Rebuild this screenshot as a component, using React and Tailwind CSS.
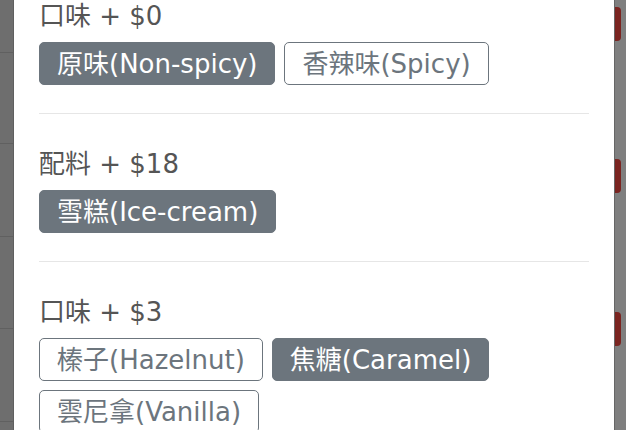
const sections = [
    {
        title: '口味 + $0',
        options: [
            { label: '原味(Non-spicy)', selected: true },
            { label: '香辣味(Spicy)', selected: false },
        ],
    },
    {
        title: '配料 + $18',
        options: [{ label: '雪糕(Ice-cream)', selected: true }],
    },
    {
        title: '口味 + $3',
        options: [
            { label: '榛子(Hazelnut)', selected: false },
            { label: '焦糖(Caramel)', selected: true },
            { label: '雲尼拿(Vanilla)', selected: false },
        ],
    },
];

function Chip({ label, selected }) {
    return (
        <button
            className={
                selected
                    ? 'h-[43px] px-[17px] rounded-[5px] border border-[#6c757d] bg-[#6c757d] text-white text-[26px] leading-none flex items-center'
                    : 'h-[43px] px-[17px] rounded-[5px] border border-[#6c757d] bg-white text-[#6c757d] text-[26px] leading-none flex items-center'
            }
        >
            {label}
        </button>
    );
}

export default function App() {
    return (
        <div
            className="w-[626px] h-[430px] overflow-hidden flex bg-white"
            style={{ fontFamily: '"DejaVu Sans", "Noto Sans CJK TC", sans-serif' }}
        >
            {/* list behind the overlay, left edge */}
            <div className="w-[14px] shrink-0 bg-[#6e6e6e] border-r border-[#5f5f5f] flex flex-col">
                <div className="h-[53px] border-b border-[#606060]"></div>
                <div className="h-[91px] border-b border-[#606060]"></div>
                <div className="h-[93px] border-b border-[#606060]"></div>
                <div className="h-[92px] border-b border-[#606060]"></div>
                <div className="h-[93px] border-b border-[#606060]"></div>
            </div>

            {/* modal */}
            <div className="flex-1 bg-white pl-[25px] pr-[25px]">
                {sections.map((s, i) => (
                    <div
                        key={i}
                        className={
                            i === 0
                                ? '-mt-[1px] pb-[28px] border-b border-[#e6e6e6]'
                                : i === sections.length - 1
                                ? 'pt-[33px]'
                                : 'pt-[33px] pb-[28px] border-b border-[#e6e6e6]'
                        }
                    >
                        <div className="text-[26px] leading-[34px] text-[#555]">{s.title}</div>
                        <div className="mt-[9px] flex flex-wrap gap-x-[9px] gap-y-[9px]">
                            {s.options.map((o) => (
                                <Chip key={o.label} {...o} />
                            ))}
                        </div>
                    </div>
                ))}
            </div>

            {/* list behind the overlay, right edge */}
            <div className="w-[12px] shrink-0 bg-[#7f7f7f] border-l border-[#666] flex flex-col">
                <div className="mt-[7px] h-[34px] w-[6px] rounded-r-[4px] bg-[#7a2420]"></div>
                <div className="mt-[118px] h-[34px] w-[6px] rounded-r-[4px] bg-[#7a2420]"></div>
                <div className="mt-[119px] h-[34px] w-[6px] rounded-r-[4px] bg-[#7a2420]"></div>
            </div>
        </div>
    );
}
